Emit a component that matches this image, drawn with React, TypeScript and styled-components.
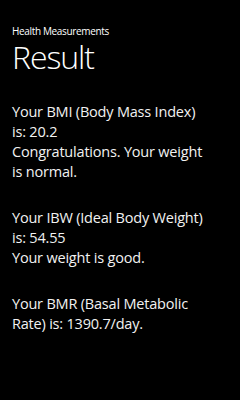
import React from 'react'
import styled, {createGlobalStyle} from 'styled-components'

const Global = createGlobalStyle`
  html, body {
    margin: 0;
    padding: 0;
    background: #000;
  }
  body {
    font-family: "Open Sans", "Noto Sans", sans-serif;
    color: #fff;
  }
`

const Page = styled.div`
  width: 240px;
  height: 400px;
  background: #000;
  overflow: hidden;
  padding: 0 12px;
  box-sizing: border-box;
`

const AppTitle = styled.div`
  padding-top: 25px;
  font-size: 10px;
  line-height: 13px;
  letter-spacing: -0.35px;
  color: #fff;
`

const PageTitle = styled.h1`
  margin: 1px 0 0;
  font-size: 32px;
  font-weight: 300;
  line-height: 36px;
  letter-spacing: -1.1px;
`

const Content = styled.div`
  padding-top: 27px;
`

const Block = styled.p`
  margin: 0 0 26px;
  font-size: 14.5px;
  line-height: 20px;
  letter-spacing: -0.2px;
  white-space: nowrap;
  color: #f2f2f2;
`

const results = [
  ['Your BMI (Body Mass Index)', 'is: 20.2', 'Congratulations. Your weight', 'is normal.'],
  ['Your IBW (Ideal Body Weight)', 'is: 54.55', 'Your weight is good.'],
  ['Your BMR (Basal Metabolic', 'Rate) is: 1390.7/day.'],
]

const App = () => {
  return (
    <>
      <Global />
      <Page>
        <AppTitle>Health Measurements</AppTitle>
        <PageTitle>Result</PageTitle>
        <Content>
          {results.map((lines, i) => (
            <Block key={i}>
              {lines.map((l, j) => (
                <React.Fragment key={j}>
                  {l}
                  {j < lines.length - 1 && <br />}
                </React.Fragment>
              ))}
            </Block>
          ))}
        </Content>
      </Page>
    </>
  )
}

export default App
